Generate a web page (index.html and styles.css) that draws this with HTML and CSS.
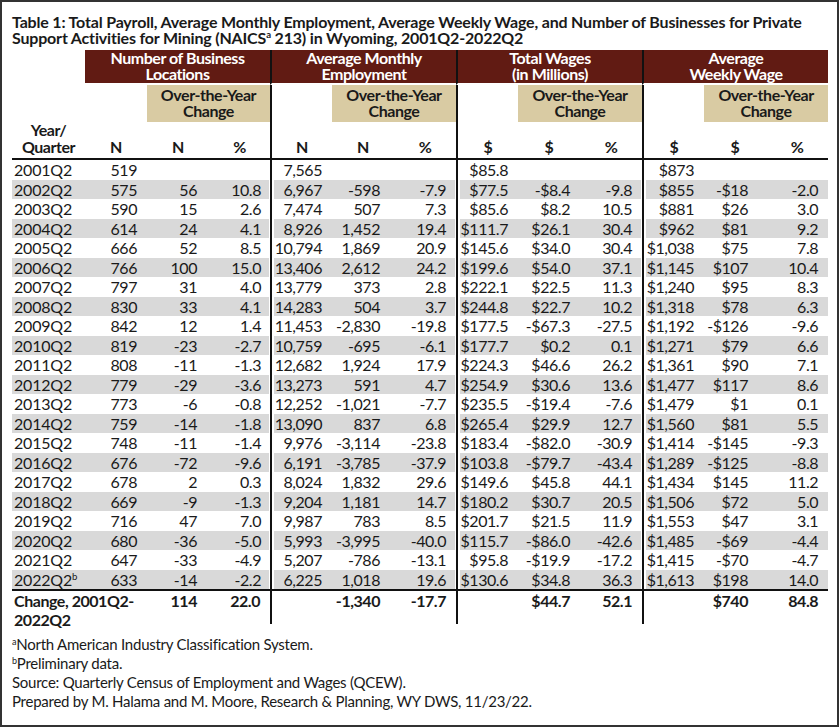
FILE: index.html
```html
<!DOCTYPE html>
<html lang="en">
<head>
<meta charset="utf-8">
<title>Table 1: Private Support Activities for Mining in Wyoming</title>
<link rel="stylesheet" href="styles.css">
</head>
<body>
<div class="frame">
  <h1 class="title">Table 1: Total Payroll, Average Monthly Employment, Average Weekly Wage, and Number of Businesses for Private<br>Support Activities for Mining (NAICS<sup>a</sup> 213) in Wyoming, 2001Q2-2022Q2</h1>
  <table class="data">
    <colgroup>
      <col class="c-year">
      <col class="c-num"><col class="c-num"><col class="c-num-narrow">
      <col class="c-num"><col class="c-num"><col class="c-num">
      <col class="c-num"><col class="c-num"><col class="c-num">
      <col class="c-num"><col class="c-num"><col class="c-num">
    </colgroup>
    <thead>
      <tr class="r-group">
        <th class="blank"></th>
        <th colspan="3" class="grp"><span class="hl">Number of Business</span><span class="hl">Locations</span></th>
        <th colspan="3" class="grp gs"><span class="hl">Average Monthly</span><span class="hl">Employment</span></th>
        <th colspan="3" class="grp gs"><span class="hl">Total Wages</span><span class="hl">(in Millions)</span></th>
        <th colspan="3" class="grp gs"><span class="hl">Average</span><span class="hl">Weekly Wage</span></th>
      </tr>
      <tr class="r-otc">
        <th class="blank"></th>
        <th class="blank"></th><th colspan="2" class="otc"><span class="hl">Over-the-Year</span><span class="hl">Change</span></th>
        <th class="blank gs"></th><th colspan="2" class="otc"><span class="hl">Over-the-Year</span><span class="hl">Change</span></th>
        <th class="blank gs"></th><th colspan="2" class="otc"><span class="hl">Over-the-Year</span><span class="hl">Change</span></th>
        <th class="blank gs"></th><th colspan="2" class="otc"><span class="hl">Over-the-Year</span><span class="hl">Change</span></th>
      </tr>
      <tr class="r-lbl">
        <th class="yr"><span class="hl">Year/</span><span class="hl">Quarter</span></th>
        <th>N</th><th>N</th><th class="ge">%</th>
        <th class="gs">N</th><th>N</th><th class="ge">%</th>
        <th class="gs">$</th><th>$</th><th class="ge">%</th>
        <th class="gs">$</th><th>$</th><th>%</th>
      </tr>
    </thead>
    <tbody>
      <tr><td>2001Q2</td><td>519</td><td></td><td class="ge"></td><td class="gs">7,565</td><td></td><td class="ge"></td><td class="gs">$85.8</td><td></td><td class="ge"></td><td class="gs">$873</td><td></td><td></td></tr>
      <tr><td>2002Q2</td><td>575</td><td>56</td><td class="ge">10.8</td><td class="gs">6,967</td><td>-598</td><td class="ge">-7.9</td><td class="gs">$77.5</td><td>-$8.4</td><td class="ge">-9.8</td><td class="gs">$855</td><td>-$18</td><td>-2.0</td></tr>
      <tr><td>2003Q2</td><td>590</td><td>15</td><td class="ge">2.6</td><td class="gs">7,474</td><td>507</td><td class="ge">7.3</td><td class="gs">$85.6</td><td>$8.2</td><td class="ge">10.5</td><td class="gs">$881</td><td>$26</td><td>3.0</td></tr>
      <tr><td>2004Q2</td><td>614</td><td>24</td><td class="ge">4.1</td><td class="gs">8,926</td><td>1,452</td><td class="ge">19.4</td><td class="gs">$111.7</td><td>$26.1</td><td class="ge">30.4</td><td class="gs">$962</td><td>$81</td><td>9.2</td></tr>
      <tr><td>2005Q2</td><td>666</td><td>52</td><td class="ge">8.5</td><td class="gs">10,794</td><td>1,869</td><td class="ge">20.9</td><td class="gs">$145.6</td><td>$34.0</td><td class="ge">30.4</td><td class="gs">$1,038</td><td>$75</td><td>7.8</td></tr>
      <tr><td>2006Q2</td><td>766</td><td>100</td><td class="ge">15.0</td><td class="gs">13,406</td><td>2,612</td><td class="ge">24.2</td><td class="gs">$199.6</td><td>$54.0</td><td class="ge">37.1</td><td class="gs">$1,145</td><td>$107</td><td>10.4</td></tr>
      <tr><td>2007Q2</td><td>797</td><td>31</td><td class="ge">4.0</td><td class="gs">13,779</td><td>373</td><td class="ge">2.8</td><td class="gs">$222.1</td><td>$22.5</td><td class="ge">11.3</td><td class="gs">$1,240</td><td>$95</td><td>8.3</td></tr>
      <tr><td>2008Q2</td><td>830</td><td>33</td><td class="ge">4.1</td><td class="gs">14,283</td><td>504</td><td class="ge">3.7</td><td class="gs">$244.8</td><td>$22.7</td><td class="ge">10.2</td><td class="gs">$1,318</td><td>$78</td><td>6.3</td></tr>
      <tr><td>2009Q2</td><td>842</td><td>12</td><td class="ge">1.4</td><td class="gs">11,453</td><td>-2,830</td><td class="ge">-19.8</td><td class="gs">$177.5</td><td>-$67.3</td><td class="ge">-27.5</td><td class="gs">$1,192</td><td>-$126</td><td>-9.6</td></tr>
      <tr><td>2010Q2</td><td>819</td><td>-23</td><td class="ge">-2.7</td><td class="gs">10,759</td><td>-695</td><td class="ge">-6.1</td><td class="gs">$177.7</td><td>$0.2</td><td class="ge">0.1</td><td class="gs">$1,271</td><td>$79</td><td>6.6</td></tr>
      <tr><td>2011Q2</td><td>808</td><td>-11</td><td class="ge">-1.3</td><td class="gs">12,682</td><td>1,924</td><td class="ge">17.9</td><td class="gs">$224.3</td><td>$46.6</td><td class="ge">26.2</td><td class="gs">$1,361</td><td>$90</td><td>7.1</td></tr>
      <tr><td>2012Q2</td><td>779</td><td>-29</td><td class="ge">-3.6</td><td class="gs">13,273</td><td>591</td><td class="ge">4.7</td><td class="gs">$254.9</td><td>$30.6</td><td class="ge">13.6</td><td class="gs">$1,477</td><td>$117</td><td>8.6</td></tr>
      <tr><td>2013Q2</td><td>773</td><td>-6</td><td class="ge">-0.8</td><td class="gs">12,252</td><td>-1,021</td><td class="ge">-7.7</td><td class="gs">$235.5</td><td>-$19.4</td><td class="ge">-7.6</td><td class="gs">$1,479</td><td>$1</td><td>0.1</td></tr>
      <tr><td>2014Q2</td><td>759</td><td>-14</td><td class="ge">-1.8</td><td class="gs">13,090</td><td>837</td><td class="ge">6.8</td><td class="gs">$265.4</td><td>$29.9</td><td class="ge">12.7</td><td class="gs">$1,560</td><td>$81</td><td>5.5</td></tr>
      <tr><td>2015Q2</td><td>748</td><td>-11</td><td class="ge">-1.4</td><td class="gs">9,976</td><td>-3,114</td><td class="ge">-23.8</td><td class="gs">$183.4</td><td>-$82.0</td><td class="ge">-30.9</td><td class="gs">$1,414</td><td>-$145</td><td>-9.3</td></tr>
      <tr><td>2016Q2</td><td>676</td><td>-72</td><td class="ge">-9.6</td><td class="gs">6,191</td><td>-3,785</td><td class="ge">-37.9</td><td class="gs">$103.8</td><td>-$79.7</td><td class="ge">-43.4</td><td class="gs">$1,289</td><td>-$125</td><td>-8.8</td></tr>
      <tr><td>2017Q2</td><td>678</td><td>2</td><td class="ge">0.3</td><td class="gs">8,024</td><td>1,832</td><td class="ge">29.6</td><td class="gs">$149.6</td><td>$45.8</td><td class="ge">44.1</td><td class="gs">$1,434</td><td>$145</td><td>11.2</td></tr>
      <tr><td>2018Q2</td><td>669</td><td>-9</td><td class="ge">-1.3</td><td class="gs">9,204</td><td>1,181</td><td class="ge">14.7</td><td class="gs">$180.2</td><td>$30.7</td><td class="ge">20.5</td><td class="gs">$1,506</td><td>$72</td><td>5.0</td></tr>
      <tr><td>2019Q2</td><td>716</td><td>47</td><td class="ge">7.0</td><td class="gs">9,987</td><td>783</td><td class="ge">8.5</td><td class="gs">$201.7</td><td>$21.5</td><td class="ge">11.9</td><td class="gs">$1,553</td><td>$47</td><td>3.1</td></tr>
      <tr><td>2020Q2</td><td>680</td><td>-36</td><td class="ge">-5.0</td><td class="gs">5,993</td><td>-3,995</td><td class="ge">-40.0</td><td class="gs">$115.7</td><td>-$86.0</td><td class="ge">-42.6</td><td class="gs">$1,485</td><td>-$69</td><td>-4.4</td></tr>
      <tr><td>2021Q2</td><td>647</td><td>-33</td><td class="ge">-4.9</td><td class="gs">5,207</td><td>-786</td><td class="ge">-13.1</td><td class="gs">$95.8</td><td>-$19.9</td><td class="ge">-17.2</td><td class="gs">$1,415</td><td>-$70</td><td>-4.7</td></tr>
      <tr><td>2022Q2<sup>b</sup></td><td>633</td><td>-14</td><td class="ge">-2.2</td><td class="gs">6,225</td><td>1,018</td><td class="ge">19.6</td><td class="gs">$130.6</td><td>$34.8</td><td class="ge">36.3</td><td class="gs">$1,613</td><td>$198</td><td>14.0</td></tr>
    </tbody>
    <tfoot>
      <tr class="r-change">
        <th colspan="2" class="chg">Change, 2001Q2-<span class="l2">2022Q2</span></th>
        <td class="c2">114</td><td class="ge">22.0</td>
        <td class="gs"></td><td class="c5">-1,340</td><td class="ge">-17.7</td>
        <td class="gs"></td><td class="c8">$44.7</td><td class="ge">52.1</td>
        <td class="gs"></td><td class="c11">$740</td><td>84.8</td>
      </tr>
    </tfoot>
  </table>
  <div class="notes">
    <p><sup>a</sup>North American Industry Classification System.</p>
    <p><sup>b</sup>Preliminary data.</p>
    <p>Source: Quarterly Census of Employment and Wages (QCEW).</p>
    <p>Prepared by M. Halama and M. Moore, Research &amp; Planning, WY DWS, 11/23/22.</p>
  </div>
</div>
</body>
</html>
```

FILE: styles.css
```css
* { box-sizing: border-box; }

body {
  margin: 0;
  background: #ffffff;
  color: #1a1a1a;
  font-family: Lato, "Open Sans", sans-serif;
}

.frame {
  width: 839px;
  height: 727px;
  border: 2px solid #333333;
  padding: 12px 10px 0 10px;
}

.title {
  margin: 0;
  font-size: 16px;
  line-height: 16px;
  font-weight: 700;
  letter-spacing: -0.18px;
  white-space: nowrap;
}

sup {
  font-size: 0.6em;
  line-height: 0;
  vertical-align: 0.6em;
}

.data {
  margin-top: 4px;
  width: 816px;
  table-layout: fixed;
  border-collapse: separate;
  border-spacing: 0;
  font-size: 16px;
}

.c-year { width: 73px; }
.c-num { width: 62px; }
.c-num-narrow { width: 61px; }

.data th,
.data td {
  padding: 0;
  white-space: nowrap;
}

.data th { letter-spacing: -0.45px; }
.data td { letter-spacing: -0.45px; }

/* stacked header lines */
.hl {
  display: block;
  height: 15.5px;
  line-height: 15.5px;
}

/* group header row */
.r-group th {
  height: 35px;
  padding: 0 0 2px;
  vertical-align: middle;
  text-align: center;
  font-weight: 700;
  border-bottom: 2px solid #ffffff;
}
.r-group .grp {
  background: #611b13;
  color: #ffffff;
}

/* over-the-year row */
.r-otc th {
  height: 37px;
  padding: 1px 0 3px;
  text-align: center;
  vertical-align: middle;
  font-weight: 700;
}
.r-otc .hl { height: 16px; line-height: 16px; }
.r-otc .otc {
  background: #d9cba3;
  color: #1a1a1a;
}

/* column label row */
.r-lbl th {
  height: 36px;
  padding: 0 0 3px;
  line-height: 16px;
  vertical-align: bottom;
  text-align: center;
  font-weight: 700;
  border-bottom: 2px solid #111111;
}
.r-lbl .hl { height: 16.5px; line-height: 16.5px; }

/* body rows */
.data tbody td {
  height: 19.5px;
  line-height: 19.5px;
  text-align: right;
  padding-right: 10px;
}
.data tbody td:first-child {
  text-align: left;
  padding-left: 2px;
  padding-right: 0;
  letter-spacing: -0.2px;
}
.data tbody tr:nth-child(even) td {
  background: #d9d9d9;
}
.data tbody tr:nth-child(even) td.gs { box-shadow: inset 2px 0 0 #ffffff; }
.data tbody tr:nth-child(even) td.ge { box-shadow: inset -1px 0 0 #ffffff; }

.data tbody td:nth-child(3) { padding-right: 12px; }
.data tbody td:nth-child(6) { padding-right: 14px; }
.data tbody td:nth-child(9) { padding-right: 10px; }
.data tbody td:nth-child(12) { padding-right: 18px; }
.data tbody td:nth-child(4) { padding-right: 9px; }
.data tbody td:nth-child(7),
.data tbody td:nth-child(10),
.data tbody td:nth-child(13) { padding-right: 10px; }

/* group separators */
.data .gs { border-left: 2px solid #111111; }

/* change row */
.r-change th,
.r-change td {
  line-height: 19px;
  vertical-align: top;
  font-weight: 700;
  border-top: 2px solid #111111;
  text-align: right;
  padding: 0 10px 0 0;
}
.r-change .chg {
  text-align: left;
  padding-left: 2px;
  padding-right: 0;
  letter-spacing: -0.45px;
}
.r-change .l2 {
  display: block;
  margin-bottom: -5px;
}
.r-change .c2 { padding-right: 12px; }
.r-change .c5 { padding-right: 14px; }
.r-change .c8 { padding-right: 10px; }
.r-change .c11 { padding-right: 18px; }

.notes {
  margin-top: 11px;
  font-size: 15px;
  line-height: 19px;
  letter-spacing: -0.25px;
}
.notes p { margin: 0; }
```
